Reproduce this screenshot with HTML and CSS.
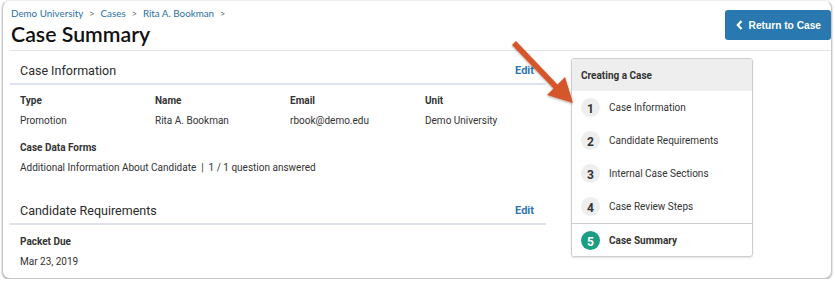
FILE: index.html
```html
<!DOCTYPE html>
<html lang="en">
<head>
  <meta charset="UTF-8" />
  <title>Case Summary</title>
  <link rel="stylesheet" href="styles.css">
</head>
<body>
  <div class="window">
    <header class="page-head">
      <div class="titles">
        <nav class="crumbs">
          <a href="#">Demo University</a><span class="sep">&gt;</span><a href="#">Cases</a><span class="sep">&gt;</span><a href="#">Rita A. Bookman</a><span class="sep">&gt;</span>
        </nav>
        <h1>Case Summary</h1>
      </div>
      <a class="btn-return" href="#">
        <svg width="7" height="10" viewBox="0 0 7 10"><path d="M5.5 1 L1.8 5 L5.5 9" fill="none" stroke="#fff" stroke-width="2.2"/></svg>
        Return to Case
      </a>
    </header>

    <div class="main">
      <div class="content">
        <section class="block">
          <div class="block-head">
            <h2>Case Information</h2>
            <a href="#" class="edit">Edit</a>
          </div>
          <div class="fields">
            <div class="field"><div class="label">Type</div><div class="value">Promotion</div></div>
            <div class="field"><div class="label">Name</div><div class="value">Rita A. Bookman</div></div>
            <div class="field"><div class="label">Email</div><div class="value">rbook@demo.edu</div></div>
            <div class="field"><div class="label">Unit</div><div class="value">Demo University</div></div>
          </div>
          <div class="field field-wide">
            <div class="label">Case Data Forms</div>
            <div class="value">Additional Information About Candidate &nbsp;|&nbsp; 1 / 1 question answered</div>
          </div>
        </section>

        <section class="block">
          <div class="block-head">
            <h2>Candidate Requirements</h2>
            <a href="#" class="edit">Edit</a>
          </div>
          <div class="field">
            <div class="label">Packet Due</div>
            <div class="value">Mar 23, 2019</div>
          </div>
        </section>
      </div>

      <aside class="steps">
        <div class="steps-head">Creating a Case</div>
        <div class="step"><span class="num">1</span>Case Information</div>
        <div class="step"><span class="num">2</span>Candidate Requirements</div>
        <div class="step"><span class="num">3</span>Internal Case Sections</div>
        <div class="step"><span class="num">4</span>Case Review Steps</div>
        <div class="step step-current"><span class="num">5</span>Case Summary</div>
      </aside>
    </div>
  </div>

  <svg class="callout" width="80" height="80" viewBox="0 0 80 80">
    <defs>
      <filter id="sh" x="-20%" y="-20%" width="140%" height="140%">
        <feDropShadow dx="0" dy="1" stdDeviation="1" flood-color="#000" flood-opacity="0.35"/>
      </filter>
    </defs>
    <g filter="url(#sh)" fill="#d4572b">
      <path d="M1 5 L5 1 L47 45 L43 49 Z"/>
      <path d="M62 63 L36 55 L54 37 Z"/>
    </g>
  </svg>
</body>
</html>
```

FILE: styles.css
```css
html, body {
  margin: 0;
  padding: 0;
  background: #ffffff;
  font-family: Roboto, "Liberation Sans", sans-serif;
  color: #333333;
}

.window {
  position: relative;
  margin-left: 2px;
  width: 830px;
  height: 279px;
  border: 1px solid #c9c9c9;
  border-top-color: #eeeeee;
  border-radius: 8px;
  box-shadow: 0 1px 2px rgba(0, 0, 0, 0.35);
  background: #ffffff;
  box-sizing: border-box;
  overflow: hidden;
}

.page-head {
  display: flex;
  justify-content: space-between;
  align-items: flex-start;
  margin-left: 7px;
  height: 49px;
  border-bottom: 1px solid #e4e4e4;
}

.titles {
  padding-left: 1px;
  padding-top: 6px;
}

.crumbs {
  font-family: Lato, "Open Sans", sans-serif;
  font-size: 9.8px;
  line-height: 13px;
}

.crumbs a {
  color: #2d6fa6;
  text-decoration: none;
}

.crumbs .sep {
  color: #666666;
  font-size: 9px;
  margin: 0 6px;
}

h1 {
  margin: 2px 0 0;
  font-family: Lato, "Open Sans", sans-serif;
  font-size: 21.3px;
  font-weight: 600;
  line-height: 24px;
  color: #111111;
}

.btn-return {
  display: flex;
  align-items: center;
  gap: 6px;
  margin-top: 9px;
  padding: 0 10px 0 11px;
  height: 30px;
  background: #2a78b0;
  border-radius: 3px;
  color: #ffffff;
  font-family: "Liberation Sans", Arial, sans-serif;
  font-size: 10.2px;
  font-weight: 700;
  text-decoration: none;
}

.main {
  display: flex;
  gap: 25px;
  padding-left: 7px;
}

.content {
  width: 536px;
}

.block {
  padding-top: 7px;
}

.block + .block {
  padding-top: 19px;
}

.block-head {
  display: flex;
  justify-content: space-between;
  align-items: center;
  height: 25px;
  padding: 0 12px 0 10px;
  border-bottom: 2px solid #dde2ec;
}

h2 {
  margin: 0;
  font-size: 12.5px;
  font-weight: 400;
  color: #2b2b2b;
}

.edit {
  color: #2d77b0;
  font-size: 11px;
  font-weight: 700;
  text-decoration: none;
}

.fields {
  display: grid;
  grid-template-columns: 135px 135px 135px 1fr;
}

.field {
  padding: 10px 10px 0;
}

.fields .field {
  padding: 9px 0 0 10px;
}

.field-wide {
  padding-top: 9px;
}

.label {
  font-size: 10px;
  font-weight: 700;
  color: #333333;
  line-height: 14px;
}

.value {
  font-size: 10px;
  line-height: 14px;
  margin-top: 6px;
  color: #333333;
}

.block .field:last-child {
  padding-bottom: 4px;
}

.steps {
  margin-top: 7px;
  width: 182px;
  height: 199px;
  box-sizing: border-box;
  border: 1px solid #cfcfcf;
  border-radius: 3px;
  box-shadow: 0 1px 2px rgba(0, 0, 0, 0.12);
  overflow: hidden;
}

.steps-head {
  height: 32px;
  display: flex;
  align-items: center;
  padding-left: 9px;
  background: #eeeeee;
  font-size: 10px;
  font-weight: 700;
  color: #333333;
}

.step {
  display: flex;
  align-items: center;
  gap: 9px;
  height: 33px;
  padding-left: 9px;
  font-size: 10px;
  color: #333333;
}

.num {
  display: flex;
  align-items: center;
  justify-content: center;
  width: 19px;
  height: 19px;
  padding-top: 2px;
  box-sizing: border-box;
  border-radius: 50%;
  background: #eeeeee;
  font-size: 12px;
  font-weight: 700;
  color: #333333;
}

.step-current {
  border-top: 1px solid #cccccc;
  font-weight: 700;
}

.step-current .num {
  background: #1c9e85;
  color: #ffffff;
}

.callout {
  position: absolute;
  left: 511px;
  top: 40px;
}
```
